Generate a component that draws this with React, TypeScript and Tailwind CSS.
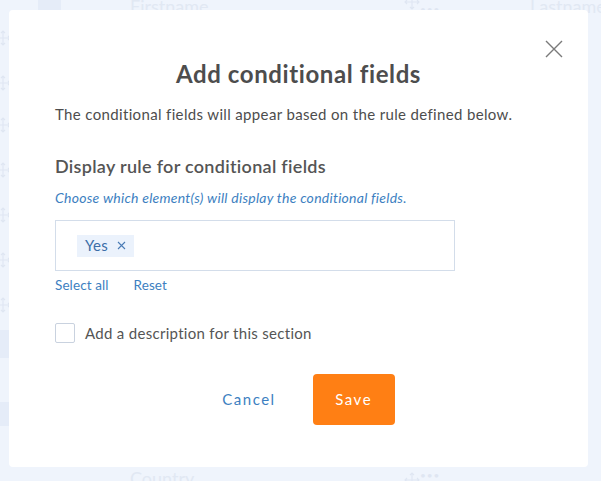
import React from "react";

function Move({ className = "" }: { className?: string }) {
  return (
    <svg className={className} width="16" height="16" viewBox="0 0 16 16" fill="none" stroke="#dfe6f2" strokeWidth="1.1">
      <path d="M8 1v14M1 8h14M6 3l2-2 2 2M6 13l2 2 2-2M3 6L1 8l2 2M13 6l2 2-2 2" />
    </svg>
  );
}

export default function App() {
  const rows = [38, 83, 125, 170, 215, 260, 305];
  return (
    <div className="relative w-[601px] h-[481px] overflow-hidden bg-[#eff4fc]" style={{ fontFamily: "Lato, 'Noto Sans', sans-serif" }}>
      {/* faint background page */}
      <div className="absolute left-[38px] top-0 w-[23px] h-[10px] bg-[#e5ecf8]" />
      <div className="absolute left-0 top-[330px] w-[10px] h-[28px] bg-[#e5ecf8]" />
      <div className="absolute left-0 top-[402px] w-[10px] h-[24px] bg-[#e5ecf8]" />
      <div className="absolute left-[130px] top-[-4px] text-[18px] leading-[20px] text-[#e1e8f3]">Firstname</div>
      <div className="absolute left-[530px] top-[-4px] text-[18px] leading-[20px] text-[#e1e8f3]">Lastname</div>
      <div className="absolute left-[130px] top-[468px] text-[18px] leading-[20px] text-[#e1e8f3]">Country</div>
      <div className="absolute left-[420px] top-[2px] text-[10px] text-[#dfe6f2] tracking-[1px]">•••</div>
      <div className="absolute left-[420px] top-[468px] text-[10px] text-[#dfe6f2] tracking-[1px]">•••</div>
      <Move className="absolute left-[404px] top-[472px]" />
      <Move className="absolute left-[404px] top-[-6px]" />
      {rows.map((y) => (
        <div key={"m" + y} className="absolute left-[-5px]" style={{ top: y - 8 }}>
          <Move />
        </div>
      ))}

      {/* modal */}
      <div className="absolute left-[9px] top-[10px] w-[579px] h-[457px] bg-white rounded-[4px] flex flex-col px-[46px] pt-[50px]">
        <button className="absolute right-[24px] top-[29px] w-[20px] h-[20px] flex items-center justify-center">
          <svg width="18" height="18" viewBox="0 0 18 18" stroke="#7a7a7a" strokeWidth="1.4" fill="none">
            <path d="M1 1l16 16M17 1L1 17" />
          </svg>
        </button>
        <h2 className="text-center text-[24px] tracking-[0.6px] font-bold text-[#4d4d4d] leading-[28px]">Add conditional fields</h2>
        <p className="mt-[16px] text-[15px] tracking-[0.35px] text-[#4d4d4d] leading-[20px]">
          The conditional fields will appear based on the rule defined below.
        </p>
        <h3 className="mt-[31px] text-[18px] tracking-[0.3px] font-semibold text-[#555555] leading-[22px]">Display rule for conditional fields</h3>
        <p className="mt-[12px] text-[14px] tracking-[0.25px] italic text-[#3d7fc1] leading-[18px]">
          Choose which element(s) will display the conditional fields.
        </p>
        <div className="mt-[13px] w-[400px] h-[51px] border border-[#d3ddea] flex items-center pl-[21px]">
          <span className="flex items-center gap-[9px] h-[22px] bg-[#ebf2fc] px-[8px] text-[15px] tracking-[0.3px] text-[#3b6ea8]">
            Yes
            <svg width="9" height="9" viewBox="0 0 9 9" stroke="#4a7bb5" strokeWidth="1.1">
              <path d="M1 1l7 7M8 1L1 8" />
            </svg>
          </span>
        </div>
        <div className="mt-[5px] flex gap-[25px] text-[13.5px] tracking-[0.1px] text-[#3d7fc1] leading-[18px]">
          <span>Select all</span>
          <span>Reset</span>
        </div>
        <label className="mt-[28px] flex items-center gap-[10px]">
          <span className="w-[20px] h-[20px] border border-[#c9d2df] rounded-[2px]" />
          <span className="text-[15px] tracking-[0.3px] text-[#555555]">Add a description for this section</span>
        </label>
        <div className="mt-[29px] flex justify-center items-center gap-[37px] pl-[20px]">
          <button className="text-[15px] tracking-[1.5px] text-[#3d7fc1]">Cancel</button>
          <button className="w-[82px] h-[51px] rounded-[4px] bg-[#ff7f14] text-white text-[15px] tracking-[1.5px]">Save</button>
        </div>
      </div>
    </div>
  );
}
